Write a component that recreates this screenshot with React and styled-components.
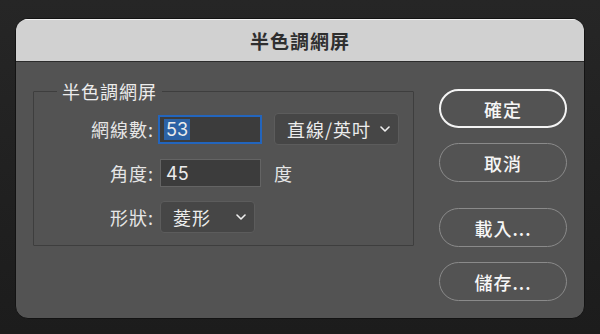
import React from "react";
import styled, { createGlobalStyle } from "styled-components";

const GlobalStyle = createGlobalStyle`
  html, body {
    margin: 0;
    padding: 0;
    width: 600px;
    height: 334px;
    overflow: hidden;
    background: linear-gradient(#262626, #1c1c1c);
  }
  * {
    box-sizing: border-box;
  }
`;

const FONT = `"Noto Sans CJK TC", "Noto Sans", sans-serif`;

const Screen = styled.div`
  padding: 18px 0 0 15px;
  font-family: ${FONT};
`;

const Dialog = styled.div`
  width: 570px;
  height: 301px;
  border: 1px solid #131313;
  border-radius: 13px;
  background: #535353;
  overflow: hidden;
  display: flex;
  flex-direction: column;
`;

const TitleBar = styled.div`
  height: 43px;
  background: #d1d1d1;
  border-top: 1px solid #f2f2f2;
  border-bottom: 1px solid #2b2b2b;
  display: flex;
  align-items: center;
  justify-content: center;
  font-size: 19px;
  font-weight: 700;
  letter-spacing: 1px;
  color: #2f2f2f;
`;

const Body = styled.div`
  flex: 1;
  display: flex;
  align-items: flex-start;
  gap: 25px;
  padding: 19px 17px 0 17px;
`;

const Group = styled.fieldset`
  width: 381px;
  margin: 0;
  padding: 12px 0 12px 0;
  border: 1px solid #3e3e3e;
  border-radius: 1px;
`;

const Legend = styled.legend`
  margin-left: 23px;
  padding: 0 5px;
  font-size: 18px;
  line-height: 20px;
  letter-spacing: 1px;
  color: #ececec;
`;

const Form = styled.div`
  display: grid;
  grid-template-columns: 120px 102px auto;
  column-gap: 5px;
  row-gap: 14px;
  align-items: center;
`;

const Label = styled.div`
  justify-self: end;
  font-size: 18px;
  line-height: 20px;
  letter-spacing: 1px;
  color: #e6e6e6;
`;

const Field = styled.div`
  height: ${(p) => (p.$focused ? "27px" : "28px")};
  display: flex;
  align-items: center;
  padding-left: ${(p) => (p.$focused ? "4px" : "5px")};
  background: #3c3c3c;
  border: 1px solid ${(p) => (p.$focused ? "#2365bd" : "#646464")};
  box-shadow: ${(p) => (p.$focused ? "0 0 0 1px #2365bd" : "none")};
  margin-left: ${(p) => (p.$focused ? "0" : "1px")};
  font-family: Inter, "Noto Sans", sans-serif;
  font-size: 18px;
  color: #ececec;
`;

const Selected = styled.span`
  background: #2c62a5;
  line-height: 21px;
  padding: 0 2px;
`;

const Select = styled.div`
  width: ${(p) => p.$width}px;
  height: 32px;
  margin-left: ${(p) => p.$offset || 0}px;
  display: flex;
  align-items: center;
  justify-content: space-between;
  padding: 0 8px 0 12px;
  background: #464646;
  border: 1px solid #5c5c5c;
  border-radius: 4px;
  font-size: 18px;
  letter-spacing: 1px;
  color: #ededed;
`;

const Unit = styled.div`
  margin-left: 8px;
  font-size: 18px;
  color: #e6e6e6;
`;

const Buttons = styled.div`
  margin-top: 8px;
  display: flex;
  flex-direction: column;
`;

const Button = styled.div`
  width: 128px;
  height: 39px;
  margin-top: ${(p) => p.$gap || 0}px;
  border-radius: 20px;
  border: ${(p) => (p.$primary ? "2px solid #f4f4f4" : "1px solid #8a8a8a")};
  display: flex;
  align-items: center;
  justify-content: center;
  font-size: 18px;
  font-weight: 500;
  letter-spacing: 1px;
  color: #f6f6f6;
`;

function Chevron() {
  return (
    <svg width="10" height="6" viewBox="0 0 10 6">
      <polyline
        points="1,1 5,5 9,1"
        fill="none"
        stroke="#f0f0f0"
        strokeWidth="1.6"
        strokeLinecap="round"
        strokeLinejoin="round"
      />
    </svg>
  );
}

export default function App() {
  return (
    <Screen>
      <GlobalStyle />
      <Dialog>
        <TitleBar>半色調網屏</TitleBar>
        <Body>
          <Group>
            <Legend>半色調網屏</Legend>
            <Form>
              <Label>網線數:</Label>
              <Field $focused>
                <Selected>53</Selected>
              </Field>
              <Select $width={125} $offset={8}>
                直線/英吋
                <Chevron />
              </Select>

              <Label>角度:</Label>
              <Field>45</Field>
              <Unit>度</Unit>

              <Label>形狀:</Label>
              <Select $width={95} $offset={1}>
                菱形
                <Chevron />
              </Select>
              <div />
            </Form>
          </Group>
          <Buttons>
            <Button $primary>確定</Button>
            <Button $gap={15}>取消</Button>
            <Button $gap={26}>載入...</Button>
            <Button $gap={15}>儲存...</Button>
          </Buttons>
        </Body>
      </Dialog>
    </Screen>
  );
}
